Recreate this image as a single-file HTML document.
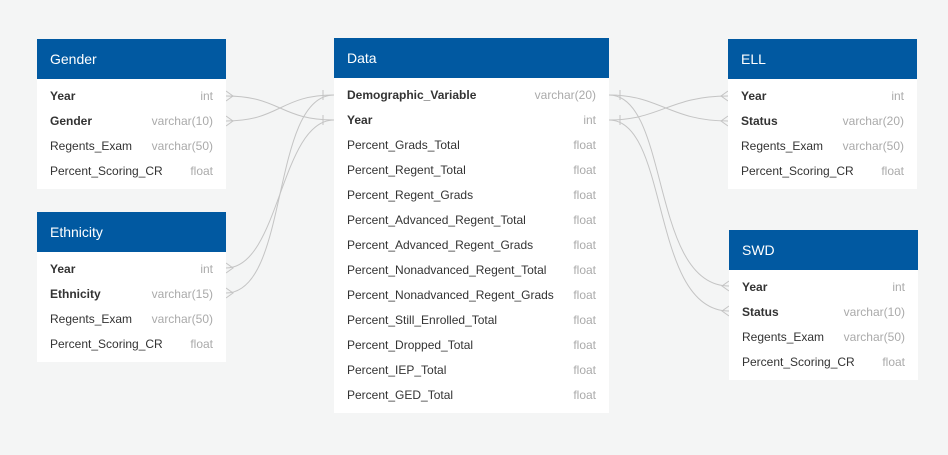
<!DOCTYPE html>
<html><head><meta charset="utf-8"><style>
body{margin:0;width:948px;height:455px;background:#f4f5f5;font-family:"Liberation Sans",sans-serif;position:relative;overflow:hidden}
.t{position:absolute;background:#fff}
.h{background:#0159a1;color:#fff;font-size:14px;height:40px;line-height:40px;padding-left:13px}
.r{height:25px;line-height:25px;font-size:12px;color:#333;padding:0 13px;display:flex;justify-content:space-between}
.r span:last-child{color:#aaa}
.b{font-weight:bold}
.rows{padding:5px 0 5px}
svg{position:absolute;left:0;top:0}
</style></head><body>
<svg width="948" height="455" fill="none" stroke="#c4c4c4" stroke-width="1">
<path d="M226 96 C280 96,280 120,334 120"/>
<path d="M226 121 C280 121,280 95,334 95"/>
<path d="M226 268 C280 268,280 120,334 120"/>
<path d="M226 293 C290 293,270 95,334 95"/>
<path d="M609 120 C660 120,670 96,728 96"/>
<path d="M609 95 C660 95,670 121,728 121"/>
<path d="M609 95 C670 95,650 286,729 286"/>
<path d="M609 120 C670 120,650 311,729 311"/>
<path d="M323 90v10M323 115v10M620 90v10M620 115v10"/>
<path d="M226 91l7 5-7 5M226 116l7 5-7 5M226 263l7 5-7 5M226 288l7 5-7 5"/>
<path d="M728 91l-7 5 7 5M728 116l-7 5 7 5M729 281l-7 5 7 5M729 306l-7 5 7 5"/>
</svg>
<div class="t" style="left:37px;top:39px;width:189px"><div class="h">Gender</div><div class="rows">
<div class="r b"><span>Year</span><span style="font-weight:normal">int</span></div>
<div class="r b"><span>Gender</span><span style="font-weight:normal">varchar(10)</span></div>
<div class="r"><span>Regents_Exam</span><span>varchar(50)</span></div>
<div class="r"><span>Percent_Scoring_CR</span><span>float</span></div></div></div>
<div class="t" style="left:37px;top:212px;width:189px"><div class="h">Ethnicity</div><div class="rows">
<div class="r b"><span>Year</span><span style="font-weight:normal">int</span></div>
<div class="r b"><span>Ethnicity</span><span style="font-weight:normal">varchar(15)</span></div>
<div class="r"><span>Regents_Exam</span><span>varchar(50)</span></div>
<div class="r"><span>Percent_Scoring_CR</span><span>float</span></div></div></div>
<div class="t" style="left:334px;top:38px;width:275px"><div class="h">Data</div><div class="rows">
<div class="r b"><span>Demographic_Variable</span><span style="font-weight:normal">varchar(20)</span></div>
<div class="r b"><span>Year</span><span style="font-weight:normal">int</span></div>
<div class="r"><span>Percent_Grads_Total</span><span>float</span></div>
<div class="r"><span>Percent_Regent_Total</span><span>float</span></div>
<div class="r"><span>Percent_Regent_Grads</span><span>float</span></div>
<div class="r"><span>Percent_Advanced_Regent_Total</span><span>float</span></div>
<div class="r"><span>Percent_Advanced_Regent_Grads</span><span>float</span></div>
<div class="r"><span>Percent_Nonadvanced_Regent_Total</span><span>float</span></div>
<div class="r"><span>Percent_Nonadvanced_Regent_Grads</span><span>float</span></div>
<div class="r"><span>Percent_Still_Enrolled_Total</span><span>float</span></div>
<div class="r"><span>Percent_Dropped_Total</span><span>float</span></div>
<div class="r"><span>Percent_IEP_Total</span><span>float</span></div>
<div class="r"><span>Percent_GED_Total</span><span>float</span></div></div></div>
<div class="t" style="left:728px;top:39px;width:189px"><div class="h">ELL</div><div class="rows">
<div class="r b"><span>Year</span><span style="font-weight:normal">int</span></div>
<div class="r b"><span>Status</span><span style="font-weight:normal">varchar(20)</span></div>
<div class="r"><span>Regents_Exam</span><span>varchar(50)</span></div>
<div class="r"><span>Percent_Scoring_CR</span><span>float</span></div></div></div>
<div class="t" style="left:729px;top:230px;width:189px"><div class="h">SWD</div><div class="rows">
<div class="r b"><span>Year</span><span style="font-weight:normal">int</span></div>
<div class="r b"><span>Status</span><span style="font-weight:normal">varchar(10)</span></div>
<div class="r"><span>Regents_Exam</span><span>varchar(50)</span></div>
<div class="r"><span>Percent_Scoring_CR</span><span>float</span></div></div></div>
</body></html>
